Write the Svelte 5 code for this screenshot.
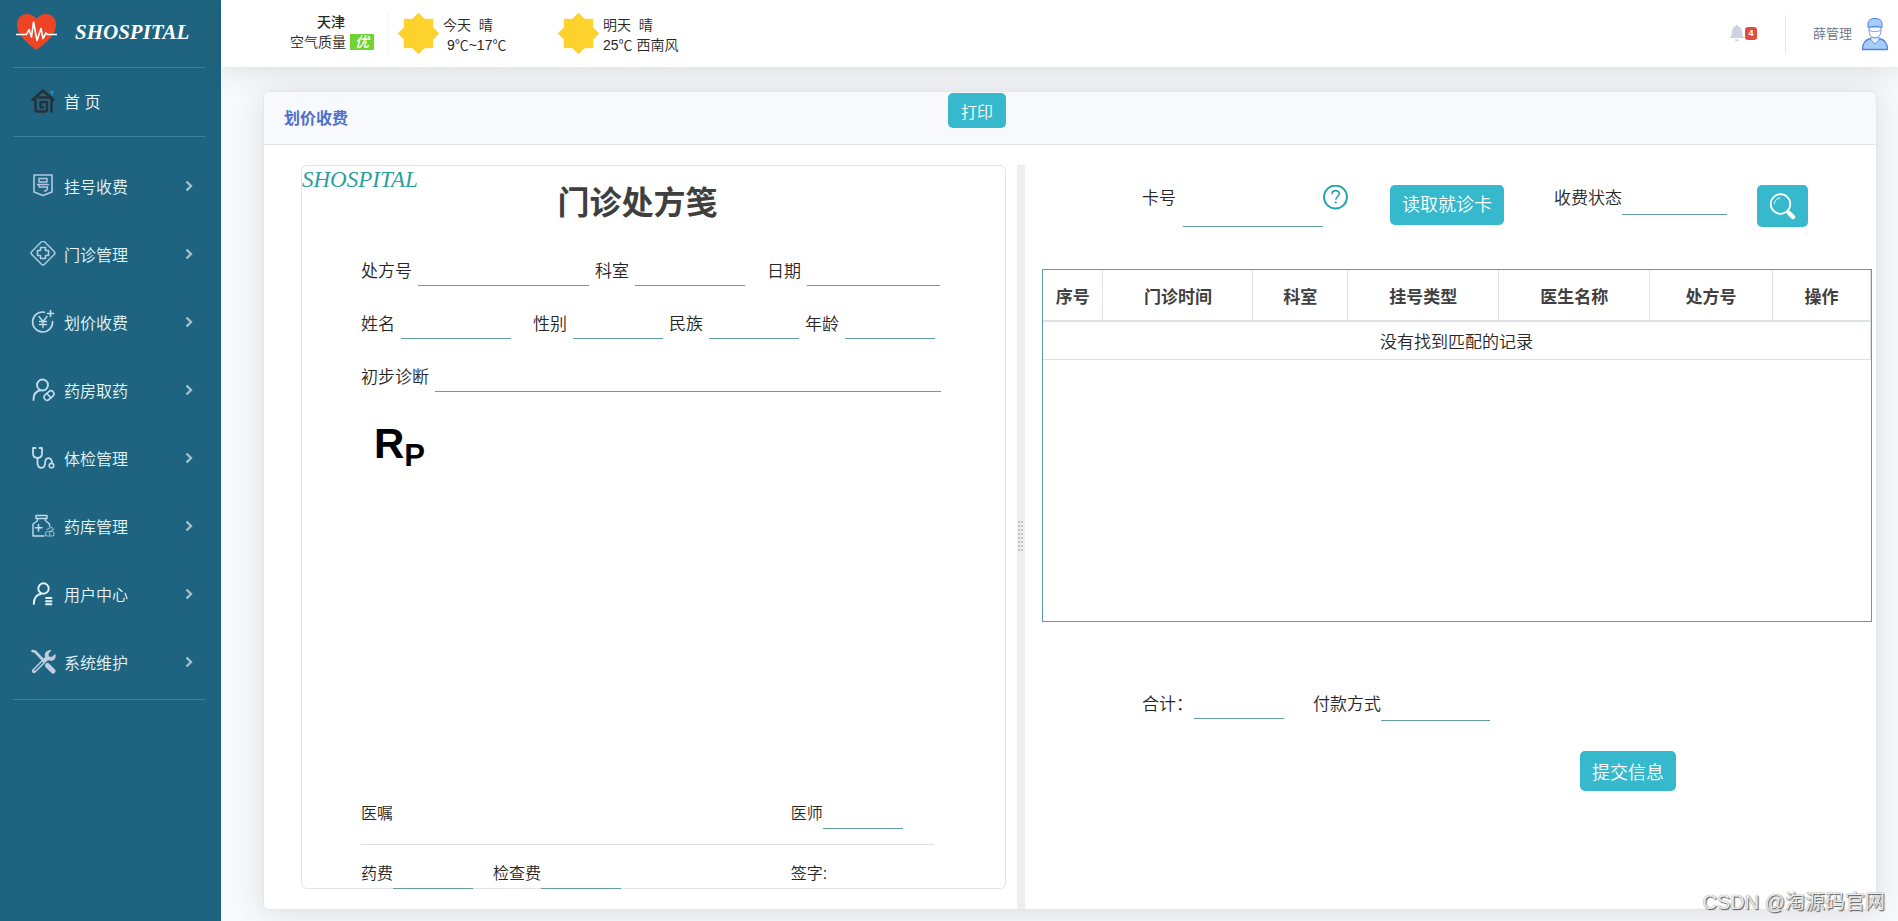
<script>
  const menu = [
    { icon: 'register', label: '挂号收费' },
    { icon: 'clinic', label: '门诊管理' },
    { icon: 'price', label: '划价收费' },
    { icon: 'pharmacy', label: '药房取药' },
    { icon: 'exam', label: '体检管理' },
    { icon: 'store', label: '药库管理' },
    { icon: 'user', label: '用户中心' },
    { icon: 'system', label: '系统维护' }
  ];
  const columns = [
    { label: '序号', width: 60 },
    { label: '门诊时间', width: 150 },
    { label: '科室', width: 95 },
    { label: '挂号类型', width: 151 },
    { label: '医生名称', width: 151 },
    { label: '处方号', width: 123 },
    { label: '操作', width: 98 }
  ];
  const total = columns.reduce((sum, c) => sum + c.width, 0);
</script>

{#snippet sun()}
  <svg class="sun" viewBox="0 0 44 44" aria-hidden="true">
    <rect x="7" y="7" width="30" height="30" fill="#fdd22c" />
    <rect x="7" y="7" width="30" height="30" fill="#fdd22c" transform="rotate(45 22 22)" />
  </svg>
{/snippet}

{#snippet menuIcon(name)}
  <svg class="icon" viewBox="0 0 26 26" fill="none" stroke="#c3dcec" stroke-width="1.6" stroke-linecap="round" stroke-linejoin="round" aria-hidden="true">
    {#if name === 'register'}
      <path d="M4 2h18v17l-9 3.500-9-3.500z" stroke="#b4c8e4" />
      <path d="M9 5.500h8v3.500H9zM7.500 11.500h11M9.500 11.500l-.5 2.500h8.500c0 2.500-.5 4-3 4" stroke="#b4c8e4" stroke-width="1.400" />
    {:else if name === 'clinic'}
      <rect x="4" y="3" width="18" height="18" rx="2.500" transform="rotate(45 13 12)" stroke="#a9c6dc" />
      <path d="M10.500 6.500h5v3h3v5h-3v3h-5v-3h-3v-5h3z" stroke="#b4d0e4" />
    {:else if name === 'price'}
      <path d="M14.500 3.200A10 10 0 1 0 22.600 12.500" />
      <path d="M20.500 1.500v6M17.500 4.500h6" />
      <path d="M9 7.500l4 5 4-5M13 12.500v6M9.500 12.500h7M9.500 15.500h7" stroke-width="1.400" />
    {:else if name === 'pharmacy'}
      <circle cx="12.500" cy="8" r="5.500" stroke-width="1.900" />
      <path d="M3.500 23c0-5.500 3-9 7-9.700" stroke-width="1.900" />
      <rect x="13.500" y="15.500" width="11" height="6" rx="3" transform="rotate(-42 19 18.500)" />
      <path d="M16.800 16.500l4 4.300" />
    {:else if name === 'exam'}
      <path d="M5.500 3H3v5c0 3.200 2 5 4.500 5s4.500-1.800 4.500-5V3H9.500" stroke-width="1.800" />
      <path d="M7.500 13v5c0 6 7 6.500 7.500 1l.3-2.500c.5-5 7-4.500 6.700 2" stroke-width="1.800" />
      <circle cx="21.500" cy="20.500" r="2.300" stroke-width="1.600" />
    {:else if name === 'store'}
      <path d="M6 2.500h11v3H6zM7.500 5.500v2.300L3 11v12h11M15.500 5.500v2.300L19.500 11v2" stroke-width="1.400" />
      <path d="M8.500 11.500v6.500M5.500 14.700h6.500" />
      <rect x="15.500" y="18.500" width="8.500" height="4.500" rx="2" stroke="#8fb4c8" stroke-width="1.200" />
      <path d="M19.700 18.500v4.500M17 16.500l4.500-2.500 2 2.500-4 2" stroke="#8fb4c8" stroke-width="1.200" />
    {:else if name === 'user'}
      <circle cx="13.500" cy="7.500" r="5.200" stroke="#e6f2f8" stroke-width="1.900" />
      <path d="M3.800 23c0-5.500 3-9.300 7.500-10.200M16 17h5.500M16 20.200h5.500M16 23.300h5.500" stroke="#e6f2f8" stroke-width="1.900" />
    {:else}
      <path d="M2.500 2l2.500.5 9 9.500" stroke="#c0cce0" stroke-width="2.600" />
      <path d="M4 22L16 10" stroke="#c0cce0" stroke-width="4.400" />
      <path d="M5 21l7.500-7.500" stroke="#1e6480" stroke-width="1.200" />
      <path d="M21.500 1l-3 4 .5 2.500 2.500.5 4-3c1 5-2.500 7.500-6 6.500l-3.500-.5-1-3.500C14 4 17 .5 21.500 1z" fill="#c0cce0" stroke="none" />
      <path d="M17.500 16.500l5.500 5.500" stroke="#c0cce0" stroke-width="5" />
    {/if}
  </svg>
{/snippet}

<div class="app">
  <aside class="sidebar">
    <a class="logo" href="#home">
      <svg width="43" height="38" viewBox="0 0 43 38" aria-hidden="true">
        <path d="M21.500 37C15 32 2 23 2 11.500 2 5 6.500 1 12 1c4 0 7.500 2 9.500 5C23.500 3 27 1 31 1c5.500 0 10 4 10 10.500C41 23 28 32 21.500 37z" fill="#ed4426" />
        <path d="M1 21.500h10.500l2.500-5 2.500 7.500L18.500 9l3.500 18.500 4-12 2 10 3-5.500 1.500 1.500H42" fill="none" stroke="#fff" stroke-width="1.600" stroke-linejoin="round" />
      </svg>
      <span>SHOSPITAL</span>
    </a>
    <hr />
    <a class="home" href="#home">
      <svg class="icon" viewBox="0 0 26 26" fill="none" stroke="#263038" stroke-width="2.400" stroke-linecap="round" stroke-linejoin="round" aria-hidden="true">
        <path d="M20 3h3v5z" fill="#2b8fd0" stroke="none" />
        <path d="M2.500 12L13 2.500 23.500 12M5.500 11v10.500c0 1.500.5 2 2 2h7.500c1.500 0 2-.5 2-2V14h-6.500v5.500h2.500M9 9.500h12.500V23.500" />
      </svg>
      <span>首 页</span>
    </a>
    <hr />
    <nav>
      {#each menu as item}
        <a href="#{item.icon}">
          {@render menuIcon(item.icon)}
          <span>{item.label}</span>
          <svg class="chevron" viewBox="0 0 8 12" aria-hidden="true"><path d="M1.500 1.500L6 6l-4.500 4.500" fill="none" stroke="#a3c1cd" stroke-width="2.400" /></svg>
        </a>
      {/each}
    </nav>
    <hr />
  </aside>

  <div class="page">
    <header class="topbar">
      <div class="city">
        <strong>天津</strong>
        <span>空气质量 <em>优</em></span>
      </div>
      <div class="day today">
        {@render sun()}
        <p><span>今天&nbsp; 晴</span><span class="temp">&nbsp;9℃~17℃</span></p>
      </div>
      <div class="day">
        {@render sun()}
        <p><span>明天&nbsp; 晴</span><span class="temp">25℃ 西南风</span></p>
      </div>
      <button class="bell" type="button" aria-label="通知">
        <svg width="16" height="17" viewBox="0 0 16 17" aria-hidden="true"><path d="M8 0c.8 0 1.200.5 1.200 1.300C11.800 2 13 4 13 6.500c0 3.500 1 4.500 2.500 6.500H.5C2 11 3 10 3 6.500 3 4 4.200 2 6.800 1.300 6.800.5 7.200 0 8 0zM6 14.500h4c0 1.200-.8 2-2 2s-2-.8-2-2z" fill="#d0d2e2" /></svg>
        <b>4</b>
      </button>
      <a class="account" href="#account">
        <span>薛管理</span>
        <svg width="28" height="34" viewBox="0 0 28 34" aria-hidden="true">
          <path d="M1.500 32.500c0-7 3-10 8.500-11l4 3 4-3c5.500 1 8.500 4 8.500 11z" fill="#a9cbf8" stroke="#4f86dc" stroke-width="1.300" />
          <path d="M10 20v3l4 4 4-4v-3" fill="#e4effd" stroke="#6c9be4" />
          <path d="M8 10c0 6 1 11 6 11s6-5 6-11z" fill="#f3f8ff" stroke="#6c9be4" />
          <path d="M8 13l3 1.500h6l3-1.500c0 4-1.500 7.500-6 7.500S8 17 8 13z" fill="#fff" stroke="#6c9be4" stroke-width=".8" />
          <path d="M7 10.500C6.500 4 8 1.500 14 1.500S21.500 4 21 10.500c-4-1.500-10-1.500-14 0z" fill="#a9cbf8" stroke="#4f86dc" />
        </svg>
      </a>
    </header>

    <main>
      <section class="card">
        <div class="card-head columns">
          <div class="head-left">
            <h2>划价收费</h2>
            <button class="btn print" type="button">打印</button>
          </div>
        </div>
        <div class="card-body columns">
          <div class="left">
            <form class="sheet">
              <div class="brand">SHOSPITAL</div>
              <h1>门诊处方笺</h1>
              <div class="fields">
                <div class="row">
                  <label for="rx-no">处方号</label><input id="rx-no" class="w171" />
                  <label for="dept">科室</label><input id="dept" class="w110 apart" />
                  <label for="date">日期</label><input id="date" class="w133" />
                </div>
                <div class="row">
                  <label for="name">姓名</label><input id="name" class="w110 apart" />
                  <label for="sex">性别</label><input id="sex" class="w90" />
                  <label for="nation">民族</label><input id="nation" class="w90" />
                  <label for="age">年龄</label><input id="age" class="w90" />
                </div>
                <div class="row">
                  <label for="diag">初步诊断</label><input id="diag" class="fill" />
                </div>
              </div>
              <div class="rp">R<span>P</span></div>
              <div class="foot">
                <div class="foot-row">
                  <div>医嘱</div>
                  <div><label for="doctor">医师</label><input id="doctor" class="w80" /></div>
                </div>
                <hr />
                <div class="foot-row">
                  <div>
                    <label for="drug-fee">药费</label><input id="drug-fee" class="w80" />
                    <label class="next" for="check-fee">检查费</label><input id="check-fee" class="w80" />
                  </div>
                  <div>签字:</div>
                </div>
              </div>
            </form>
          </div>

          <div class="splitter">
            <svg width="6" height="32" viewBox="0 0 6 32" aria-hidden="true">
              {#each [0, 1, 2, 3, 4, 5, 6, 7] as i}
                <path d="M0 {i * 4 + 1}h2M3 {i * 4 + 1}h2" stroke="#c4c4c4" stroke-width="2" />
              {/each}
            </svg>
          </div>

          <div class="right">
            <div class="filters">
              <label for="card-no">卡号</label>
              <input id="card-no" class="card-no" />
              <svg class="help" width="25" height="25" viewBox="0 0 25 25" fill="none" aria-hidden="true">
                <circle cx="12.500" cy="12" r="11.500" stroke="#24a3ae" stroke-width="1.900" />
                <path d="M9 9.200c0-4.800 7.300-4.500 7.300-.4 0 2.600-3.500 2.900-3.500 5.900" stroke="#24a3ae" stroke-width="1.600" />
                <circle cx="12.700" cy="17.500" r="1.100" fill="#24a3ae" />
              </svg>
              <button class="btn read" type="button">读取就诊卡</button>
              <label for="status">收费状态</label>
              <select id="status" class="status"></select>
              <button class="btn search" type="button" aria-label="查询">
                <svg width="27" height="27" viewBox="0 0 27 27" fill="none" stroke="#fff" aria-hidden="true">
                  <circle cx="11.500" cy="11" r="9.800" stroke-width="1.800" />
                  <path d="M5.500 11c0-3.500 2.500-6 6-6" stroke-width="1" />
                  <path d="M17.800 17.800l2.400 2.400" stroke-width="2" />
                  <path d="M20 20l4 4" stroke-width="4.500" stroke-linecap="round" />
                </svg>
              </button>
            </div>

            <div class="table-box">
              <table>
                <colgroup>
                  {#each columns as c}<col style="width: {(c.width / total) * 100}%" />{/each}
                </colgroup>
                <thead>
                  <tr>{#each columns as c}<th scope="col">{c.label}</th>{/each}</tr>
                </thead>
                <tbody>
                  <tr><td colspan={columns.length}>没有找到匹配的记录</td></tr>
                </tbody>
              </table>
            </div>

            <div class="pay">
              <label for="sum">合计：</label>
              <input id="sum" class="w90" />
              <label for="method">付款方式</label>
              <select id="method" class="method"></select>
            </div>
            <button class="btn submit" type="button">提交信息</button>
          </div>
        </div>
      </section>
    </main>
  </div>
  <div class="watermark">CSDN @淘源码官网</div>
</div>

<style>
  :global(body) { margin: 0; }
  .app, .app * { box-sizing: border-box; }
  .app {
    position: relative;
    display: flex;
    min-height: 100vh;
    overflow: hidden;
    background: #f8f9fc;
    color: #262626;
    font-family: "Liberation Sans", "Noto Sans CJK SC", sans-serif;
    font-size: 17px;
    font-weight: 350;
  }
  a { color: inherit; text-decoration: none; }
  h1, h2, p { margin: 0; }
  hr { margin: 0; border: 0; border-top: 1px solid #dddfe4; }
  button { font: inherit; cursor: pointer; }

  .sidebar {
    flex: 0 0 221px;
    background: #1e6480;
    color: #e6f7fc;
    font-size: 16px;
  }
  .sidebar hr { margin: 0 16px 0 13px; border-color: #3f7f98; }
  .logo {
    display: flex;
    align-items: center;
    gap: 17px;
    height: 67px;
    padding: 0 0 3px 15px;
    color: #fff;
    font: italic bold 21px "Liberation Serif", serif;
  }
  .icon { width: 26px; height: 26px; flex: none; }
  .home, nav a { display: flex; align-items: center; gap: 8px; height: 68px; padding: 0 28px 0 30px; }
  .home { padding-bottom: 3px; color: #fff; }
  nav { padding: 15px 0 3px; }
  nav span { flex: 1; }
  .chevron { width: 8px; height: 12px; }

  .page { flex: 1; min-width: 0; display: flex; flex-direction: column; }
  .topbar {
    display: flex;
    align-items: center;
    height: 67px;
    padding: 0 9px 0 69px;
    background: #fff;
    box-shadow: 0 2px 28px rgba(58, 59, 69, 0.15);
    font-size: 14px;
    line-height: 20px;
  }
  .city {
    display: flex;
    flex-direction: column;
    width: 98px;
    height: 44px;
    border-right: 1px solid #f4f4f4;
  }
  .city strong { padding-left: 27px; font-weight: 500; }
  .city em { display: inline-block; width: 24px; height: 16px; line-height: 16px; background: #6fd236; color: #fff; text-align: center; font-weight: 500; }
  .day { display: flex; align-items: center; gap: 3px; margin-left: 38px; }
  .today { width: 122px; margin-left: 9px; }
  .sun { width: 43px; height: 43px; flex: none; }
  .day p { display: flex; flex-direction: column; padding-top: 2px; white-space: nowrap; }
  .bell { display: flex; align-items: center; margin-left: auto; padding: 0; border: 0; background: none; }
  .bell b { width: 12px; height: 13px; border-radius: 3px; background: #e74a3b; color: #fff; font-size: 9px; line-height: 13px; font-weight: 700; }
  .account { display: flex; align-items: center; gap: 9px; height: 38px; margin-left: 28px; padding-left: 27px; border-left: 1px solid #e3e6f0; color: #6e7082; font-size: 13px; }

  main { flex: 1; display: flex; padding: 24px 21px 11px 42px; }
  .card {
    flex: 1;
    min-width: 0;
    display: flex;
    flex-direction: column;
    border: 1px solid #e3e6f0;
    border-radius: 6px;
    background: #fff;
    box-shadow: 0 2px 28px rgba(58, 59, 69, 0.15);
  }
  .columns { display: grid; grid-template-columns: 753fr 8px 851fr; }
  .card-head { height: 53px; border-bottom: 1px solid #e1e3e8; border-radius: 6px 6px 0 0; background: #f8f9fc; }
  .head-left { display: flex; justify-content: space-between; align-items: flex-start; padding: 1px 11px 0 20px; }
  h2 { color: #4e6fcd; font-size: 16px; line-height: 51px; font-weight: 700; }
  .btn { padding: 0; border: 0; border-radius: 5px; background: #36b9cc; color: #fff; font-size: 18px; }
  .print { width: 58px; height: 35px; font-size: 16px; }

  .card-body { flex: 1; padding-top: 20px; }
  .left { display: flex; padding: 0 11px 20px 37px; }
  .sheet { flex: 1; display: flex; flex-direction: column; border: 1px solid #e1e3e6; border-radius: 6px; }
  .brand { height: 26px; color: #2ba0a0; font: italic 23px/28px "Liberation Serif", serif; }
  h1 { margin-top: -10px; padding-right: 32px; color: #3f3f3f; font-size: 32px; line-height: 42px; font-weight: 700; text-align: center; }
  .fields { display: flex; flex-direction: column; gap: 25px; padding: 34px 64px 0 59px; }
  .row { display: flex; gap: 6px; height: 28px; line-height: 28px; white-space: nowrap; }
  input, select {
    min-width: 0;
    padding: 0;
    border: 0;
    border-bottom: 1px solid #5f9ea0;
    border-radius: 0;
    outline: 0;
    appearance: none;
    background: none;
    font: inherit;
    color: inherit;
  }
  .w80 { width: 80px; }
  .w90 { width: 90px; }
  .w110 { width: 110px; }
  .w133 { width: 133px; }
  .w171 { width: 171px; }
  .fill { flex: 1; }
  .apart { margin-right: 16px; }
  .rp { padding: 28px 0 0 72px; color: #000; font-size: 42px; line-height: 48px; font-weight: 700; }
  .rp span { position: relative; top: 8px; font-size: 31px; }
  .foot { margin-top: auto; padding: 0 71px 0 59px; font-size: 16px; }
  .foot-row { display: grid; grid-template-columns: 3fr 1fr; height: 28px; line-height: 28px; white-space: nowrap; }
  .foot-row div { display: flex; }
  .foot hr { margin: 16px 0 15px; }
  .next { margin-left: 20px; }

  .splitter { display: flex; align-items: center; justify-content: center; background: #eee; }
  .right { display: flex; flex-direction: column; padding: 20px 4px 0 17px; }
  .filters { display: flex; align-items: flex-start; height: 84px; padding-left: 100px; line-height: 28px; white-space: nowrap; }
  .card-no { width: 140px; height: 42px; margin-left: 7px; }
  .btn.read { width: 114px; height: 40px; margin: 0 50px 0 42px; }
  .status { width: 105px; height: 30px; margin-right: 30px; }
  .search { display: grid; place-items: center; width: 51px; height: 42px; }
  .table-box { height: 353px; border: 1px solid #5f9ea0; }
  table { width: 100%; border-collapse: collapse; table-layout: fixed; }
  th { height: 51px; padding: 0; border-right: 1px solid #dee2e6; border-bottom: 2px solid #dee2e6; color: #3f3f3f; font-weight: 700; }
  td { height: 38px; padding: 0; border-right: 1px solid #dee2e6; border-bottom: 1px solid #dee2e6; text-align: center; }
  .pay { display: flex; align-items: flex-start; height: 61px; margin-top: 68px; padding-left: 100px; line-height: 29px; }
  .pay input { height: 29px; margin: 0 29px 0 1px; }
  .method { width: 109px; height: 31px; }
  .submit { width: 96px; height: 40px; margin-left: 538px; }
  .watermark {
    position: absolute;
    right: 13px;
    bottom: 4px;
    color: #ececee;
    font-size: 20px;
    line-height: 30px;
    text-shadow: 1px 1px 1px #555, 0 0 1px #888;
  }
</style>
